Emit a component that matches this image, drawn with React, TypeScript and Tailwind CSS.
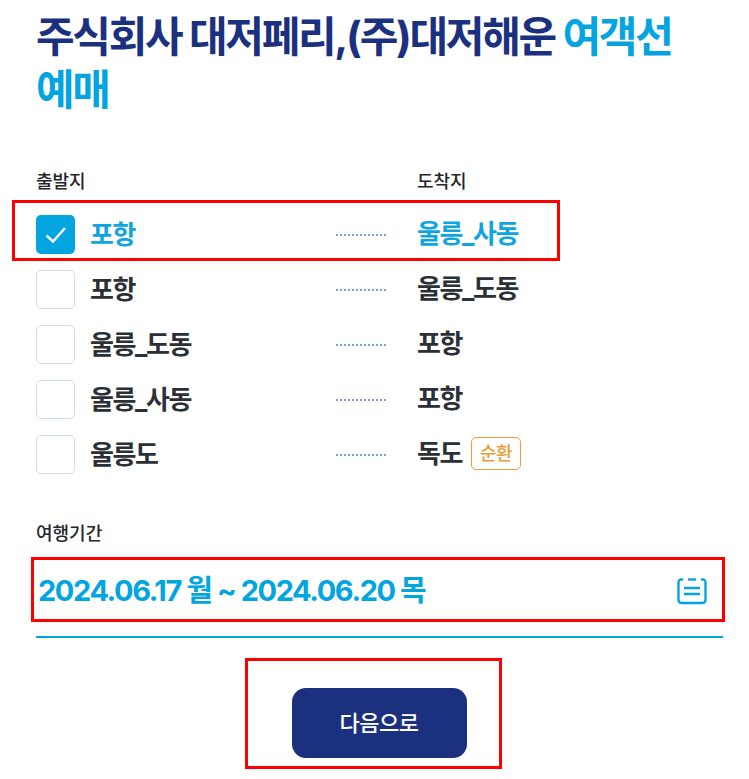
import React from "react";

const font = { fontFamily: '"Inter", "Noto Sans CJK KR", sans-serif' };

const routes = [
    { from: "포항", to: "울릉_사동", checked: true },
    { from: "포항", to: "울릉_도동" },
    { from: "울릉_도동", to: "포항" },
    { from: "울릉_사동", to: "포항" },
    { from: "울릉도", to: "독도", badge: "순환" },
];

function RouteRow({ route }: { route: { from: string; to: string; checked?: boolean; badge?: string } }) {
    const color = route.checked ? "text-[#0ea5e0]" : "text-[#2b2f36]";
    return (
        <div className="flex h-[55px] items-center">
            {route.checked ? (
                <div className="flex h-[39px] w-[39px] shrink-0 items-center justify-center rounded-[5px] bg-[#03a5e0]">
                    <svg width="22" height="18" viewBox="0 0 22 18" fill="none" stroke="white" strokeWidth="2.4">
                        <path d="M1.5 9.5 L8 15.5 L20 2" />
                    </svg>
                </div>
            ) : (
                <div className="h-[39px] w-[39px] shrink-0 rounded-[5px] border border-[#d3dcec] bg-white" />
            )}
            <div className={`ml-[15px] w-[246px] text-[26px] font-bold tracking-[-1.4px] ${color}`}>{route.from}</div>
            <div className="h-0 w-[50px] border-t-2 border-dotted border-[#7d9fd0]" />
            <div className={`ml-[31px] flex items-center gap-[9px] pb-[3px] text-[26px] font-bold tracking-[-1.4px] ${color}`}>
                {route.to}
                {route.badge && (
                    <span className="flex h-[33px] w-[50px] items-center justify-center rounded-[5px] border border-[#ee9b33] text-[18px] font-medium tracking-[-0.5px] text-[#ee9b33]">
                        {route.badge}
                    </span>
                )}
            </div>
        </div>
    );
}

export default function App() {
    return (
        <div className="h-[779px] w-[749px] overflow-hidden bg-white pl-[36px] pr-[26px]" style={font}>
            {/* Title */}
            <h1 className="break-keep pt-[10px] text-[42px] leading-[53px] font-bold tracking-[-2.3px] text-[#1b3180]">
                주식회사 대저페리,(주)대저해운 <span className="text-[#03a5e0]">여객선 예매</span>
            </h1>

            {/* Route table */}
            <div className="mt-[54px] flex text-[18px] font-medium text-[#22252b]">
                <div className="w-[381px] leading-[24px]">출발지</div>
                <div className="leading-[24px]">도착지</div>
            </div>
            <div className="relative mt-[13px]">
                <div className="absolute top-[-7px] left-[-24px] h-[61px] w-[548px] border-[3px] border-[#fe0000]" />
                {routes.map((route, i) => (
                    <RouteRow key={i} route={route} />
                ))}
            </div>

            {/* Period */}
            <div className="mt-[40px] text-[18px] font-medium leading-[24px] text-[#22252b]">여행기간</div>
            <div className="relative mt-[11px] flex h-[81px] items-center justify-between border-b-2 border-[#03a5e0] pb-[11px] pr-[16px] pl-[2px]">
                <div className="absolute top-0 left-[-5px] h-[65px] w-[694px] border-[3px] border-[#fe0000]" />
                <span className="text-[29px] font-bold tracking-[-1.42px] text-[#03a5e0]">2024.06.17 월 ~ 2024.06.20 목</span>
                <svg width="30" height="28" viewBox="0 0 30 28" fill="none" stroke="#03a5e0" strokeWidth="2.4">
                    <path d="M6 2.5 H4 A2.5 2.5 0 0 0 1.5 5 V23 A3 3 0 0 0 4.5 26 H25.5 A3 3 0 0 0 28.5 23 V5 A2.5 2.5 0 0 0 26 2.5 H24" />
                    <path d="M11 2.5 H19" />
                    <path d="M7 11 H23 M7 17 H23" strokeWidth="2.4" />
                </svg>
            </div>

            {/* Next */}
            <div className="relative mt-[50px] flex justify-center pr-[1px]">
                <div className="absolute top-[-30px] left-[209px] h-[111px] w-[257px] border-[3px] border-[#fe0000]" />
                <button className="h-[70px] w-[175px] rounded-[14px] bg-[#1b3180] text-[22px] font-medium tracking-[-0.5px] text-white">
                    다음으로
                </button>
            </div>
        </div>
    );
}
